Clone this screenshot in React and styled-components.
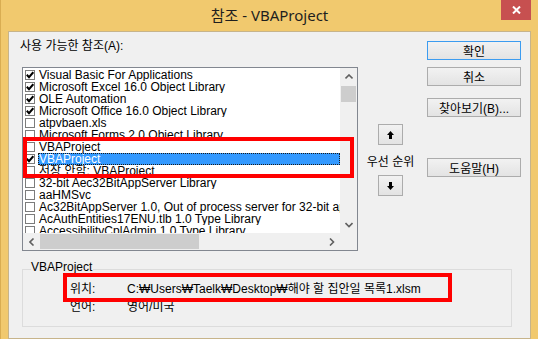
import React from 'react'
import styled, { createGlobalStyle } from 'styled-components'

const GlobalStyle = createGlobalStyle`
  body {
    margin: 0;
    background: #fff;
  }
  * {
    box-sizing: border-box;
  }
`

const ui = `"Liberation Sans", "Noto Sans CJK KR", sans-serif`

const Window = styled.div`
  width: 538px;
  height: 339px;
  overflow: hidden;
  display: flex;
  flex-direction: column;
  background: #f1c96e;
  border-left: 1px solid #d9ad52;
  font-family: ${ui};
  font-size: 12px;
  color: #000;
`

const TitleBar = styled.div`
  flex: none;
  height: 31px;
  display: grid;
  grid-template-columns: 1fr auto 1fr;
  align-items: start;
`

const Title = styled.div`
  grid-column: 2;
  font-family: "Noto Sans", "Noto Sans CJK KR", sans-serif;
  font-size: 15px;
  line-height: 30px;
  color: #1e1e1e;
  white-space: nowrap;
`

const Close = styled.div`
  grid-column: 3;
  justify-self: end;
  margin-right: 7px;
  width: 30px;
  height: 20px;
  background: #c75050;
  display: flex;
  align-items: center;
  justify-content: center;
`

const Client = styled.div`
  flex: 1;
  margin-left: 7px;
  width: 523px;
  background: #f0f0f0;
  border: 1px solid #c7b48a;
  padding: 9px 0 0 13px;
`

const Top = styled.div`
  display: flex;
  align-items: flex-start;
`

const LeftCol = styled.div`
  width: 336px;
`

const Caption = styled.div`
  height: 26px;
  line-height: 10px;
  margin-left: -2px;
  white-space: nowrap;
`

const ListBox = styled.div`
  position: relative;
  width: 336px;
  height: 184px;
  border: 1px solid #828790;
  background: #fff;
  display: grid;
  grid-template-columns: 1fr 17px;
  grid-template-rows: 1fr 17px;
`

const Viewport = styled.div`
  overflow: hidden;
  padding-top: 1px;
`

const Row = styled.div`
  height: 12px;
  display: flex;
  align-items: center;
  padding-left: 2px;
`

const Check = styled.span`
  flex: none;
  width: 10px;
  height: 10px;
  border: 1px solid #7c7c7c;
  background: #fff;
  display: flex;
  align-items: center;
  justify-content: center;
`

const ItemText = styled.span`
  flex: 1;
  height: 12px;
  margin-left: 3px;
  padding-left: 1px;
  line-height: 12px;
  white-space: nowrap;
  overflow: hidden;
  background: ${p => (p.$selected ? '#3399ff' : 'transparent')};
  color: ${p => (p.$selected ? '#fff' : '#000')};
  outline: ${p => (p.$selected ? '1px dotted #1b1b1b' : 'none')};
  outline-offset: -1px;
`

const VScroll = styled.div`
  background: #f0f0f0;
  display: flex;
  flex-direction: column;
`

const HScroll = styled.div`
  background: #f0f0f0;
  display: flex;
  align-items: center;
`

const Corner = styled.div`
  background: #f0f0f0;
`

const ScrollBtn = styled.div`
  flex: none;
  width: 17px;
  height: 17px;
  display: flex;
  align-items: center;
  justify-content: center;
`

const VThumb = styled.div`
  width: 15px;
  height: 16px;
  margin: 1px auto 0;
  background: #cdcdcd;
`

const HThumb = styled.div`
  width: 159px;
  height: 15px;
  background: #cdcdcd;
`

const Spacer = styled.div`
  flex: 1;
`

const ListMark = styled.div`
  position: absolute;
  left: 0;
  top: 69px;
  width: 331px;
  height: 41px;
  border: 4px solid #ff0000;
  pointer-events: none;
`

const Middle = styled.div`
  width: 69px;
  padding: 83px 4px 0 0;
  display: flex;
  flex-direction: column;
  align-items: center;
`

const Bevel = styled.div`
  border: 1px solid #acacac;
  background: linear-gradient(#f2f2f2, #e3e3e3);
  display: flex;
  align-items: center;
  justify-content: center;
  white-space: nowrap;
`

const ArrowButton = styled(Bevel)`
  width: 25px;
  height: 21px;
`

const Priority = styled.div`
  margin: 11px 0 7px;
  line-height: 12px;
  white-space: nowrap;
`

const Buttons = styled.div`
  width: 94px;
  display: flex;
  flex-direction: column;
`

const Button = styled(Bevel)`
  height: 19px;
  margin-top: ${p => p.$gap || 0}px;
  border-color: ${p => (p.$primary ? '#3c9cf0' : '#acacac')};
`

const GroupBox = styled.fieldset`
  margin: 10px 0 0;
  width: 490px;
  min-width: 0;
  border: 1px solid #dcdcdc;
  padding: 3px 0 10px;
`

const Legend = styled.legend`
  margin-left: 8px;
  padding: 0 1px 4px 0;
  line-height: 12px;
`

const InfoList = styled.div`
  padding-left: 47px;
`

const InfoRow = styled.div`
  position: relative;
  display: grid;
  grid-template-columns: 57px 1fr;
  height: 18px;
  line-height: 18px;
  white-space: nowrap;

  ${p => p.$marked && `
    &::after {
      content: '';
      position: absolute;
      left: -7px;
      right: 59px;
      top: -7px;
      bottom: -4px;
      border: 4px solid #ff0000;
      z-index: 1;
    }
  `}
`

const items = [
  { text: 'Visual Basic For Applications', checked: true },
  { text: 'Microsoft Excel 16.0 Object Library', checked: true },
  { text: 'OLE Automation', checked: true },
  { text: 'Microsoft Office 16.0 Object Library', checked: true },
  { text: 'atpvbaen.xls' },
  { text: 'Microsoft Forms 2.0 Object Library' },
  { text: 'VBAProject' },
  { text: 'VBAProject', checked: true, selected: true },
  { text: '저장 안함: VBAProject' },
  { text: '32-bit Aec32BitAppServer Library' },
  { text: 'aaHMSvc' },
  { text: 'Ac32BitAppServer 1.0, Out of process server for 32-bit applications' },
  { text: 'AcAuthEntities17ENU.tlb 1.0 Type Library' },
  { text: 'AccessibilityCplAdmin 1.0 Type Library' }
]

const Tick = () => (
  <svg width='8' height='8' viewBox='0 0 8 8'>
    <path d='M0.8 3.8 L3 6.2 L7.3 1.2' fill='none' stroke='#000' strokeWidth='2' />
  </svg>
)

const Chevron = ({ dir }) => {
  const d = {
    up: 'M0.5 4.5 L4 1 L7.5 4.5',
    down: 'M0.5 1 L4 4.5 L7.5 1',
    left: 'M4.5 0.5 L1 4 L4.5 7.5',
    right: 'M1 0.5 L4.5 4 L1 7.5'
  }[dir]
  const vertical = dir === 'up' || dir === 'down'
  return (
    <svg width={vertical ? 8 : 6} height={vertical ? 6 : 8} viewBox={vertical ? '0 0 8 6' : '0 0 6 8'}>
      <path d={d} fill='none' stroke='#606060' strokeWidth='1.6' />
    </svg>
  )
}

const Arrow = ({ down }) => (
  <svg width='7' height='8' viewBox='0 0 7 8' style={down ? { transform: 'rotate(180deg)' } : null}>
    <path d='M3.5 0 L7 4 L5 4 L5 8 L2 8 L2 4 L0 4 Z' fill='#000' />
  </svg>
)

const App = () => (
  <Window>
    <GlobalStyle />
    <TitleBar>
      <Title>참조 - VBAProject</Title>
      <Close>
        <svg width='9' height='8' viewBox='0 0 9 8'>
          <path d='M1 0.5 L8 7.5 M8 0.5 L1 7.5' stroke='#fff' strokeWidth='2' />
        </svg>
      </Close>
    </TitleBar>
    <Client>
      <Top>
        <LeftCol>
          <Caption>사용 가능한 참조(A):</Caption>
          <ListBox>
            <Viewport>
              {items.map((item, i) => (
                <Row key={i}>
                  <Check>{item.checked && <Tick />}</Check>
                  <ItemText $selected={item.selected}>{item.text}</ItemText>
                </Row>
              ))}
            </Viewport>
            <VScroll>
              <ScrollBtn><Chevron dir='up' /></ScrollBtn>
              <VThumb />
              <Spacer />
              <ScrollBtn><Chevron dir='down' /></ScrollBtn>
            </VScroll>
            <HScroll>
              <ScrollBtn><Chevron dir='left' /></ScrollBtn>
              <HThumb />
              <Spacer />
              <ScrollBtn><Chevron dir='right' /></ScrollBtn>
            </HScroll>
            <Corner />
            <ListMark />
          </ListBox>
        </LeftCol>
        <Middle>
          <ArrowButton><Arrow /></ArrowButton>
          <Priority>우선 순위</Priority>
          <ArrowButton><Arrow down /></ArrowButton>
        </Middle>
        <Buttons>
          <Button $primary>확인</Button>
          <Button $gap={7}>취소</Button>
          <Button $gap={12}>찾아보기(B)...</Button>
          <Button $gap={41}>도움말(H)</Button>
        </Buttons>
      </Top>
      <GroupBox>
        <Legend>VBAProject</Legend>
        <InfoList>
          <InfoRow $marked>
            <span>위치:</span>
            <span>C:₩Users₩Taelk₩Desktop₩해야 할 집안일 목록1.xlsm</span>
          </InfoRow>
          <InfoRow>
            <span>언어:</span>
            <span>영어/미국</span>
          </InfoRow>
        </InfoList>
      </GroupBox>
    </Client>
  </Window>
)

export default App
